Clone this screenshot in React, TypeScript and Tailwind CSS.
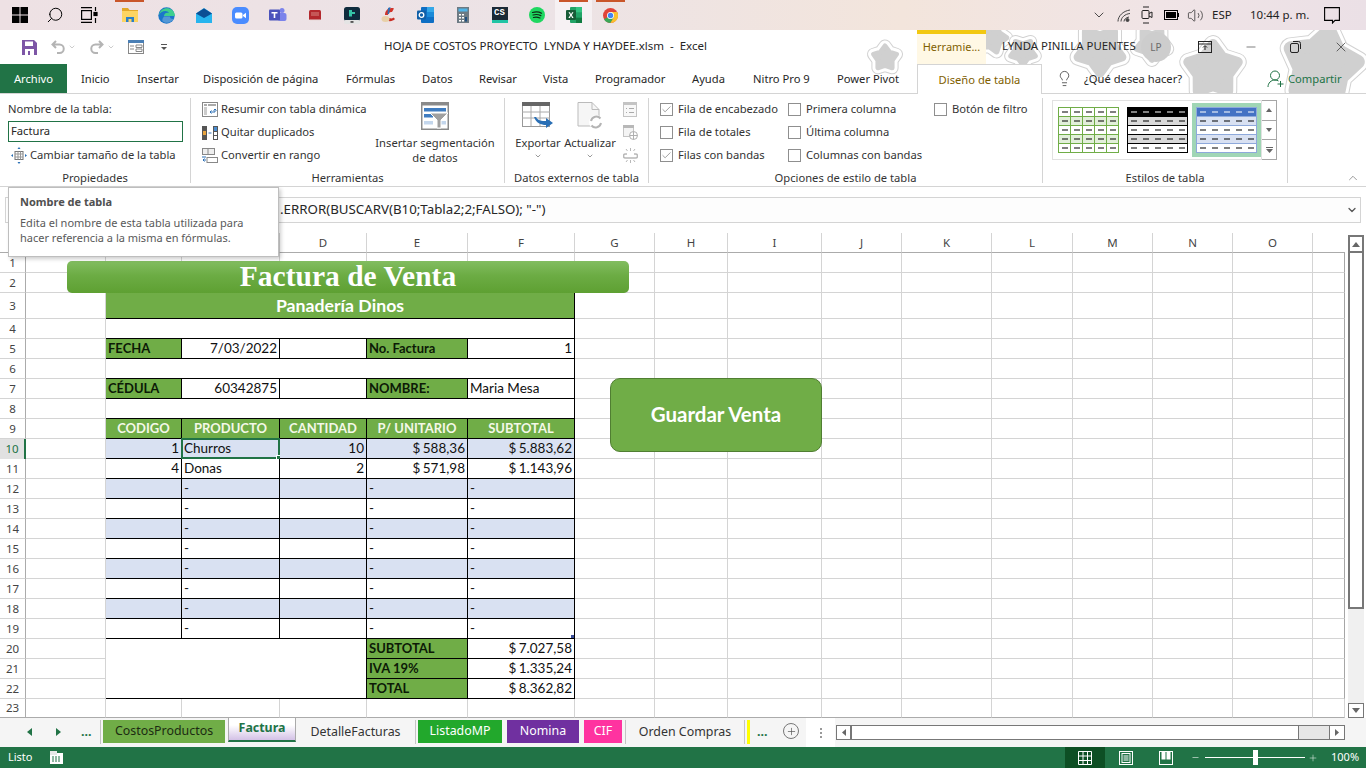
import { ChevronDown, ChevronUp, Minus, Search, Volume2, X, Lightbulb, Plus, Check } from 'lucide-react'
import type { ReactNode } from 'react'

const colWidths = 'grid-cols-[26px_80px_76px_98px_87px_101px_107px_80px_73px_94px_80px_90px_81px_80px_80px_80px_32px]'
// A, B and C are hidden behind the tooltip
const letters = ['', '', '', 'D', 'E', 'F', 'G', 'H', 'I', 'J', 'K', 'L', 'M', 'N', 'O', '']
const rowNumbers = Array.from({ length: 23 }, (_, i) => i + 1)
const money = 'justify-end [word-spacing:-1px]'

function starPoints(cx: number, cy: number, r: number, rot: number) {
  const pts: string[] = []
  for (let i = 0; i < 10; i++) {
    const rad = i % 2 === 0 ? r : r * 0.62
    const a = -Math.PI / 2 + rot + (i * Math.PI) / 5
    pts.push(`${(cx + rad * Math.cos(a)).toFixed(1)},${(cy + rad * Math.sin(a)).toFixed(1)}`)
  }
  return pts.join(' ')
}

function Star({ cx, cy, r, rot = 0 }: { cx: number; cy: number; r: number; rot?: number }) {
  const pts = starPoints(cx, cy, r * 0.72, rot)
  const core = r * 0.28
  return (
    <g strokeLinejoin="round">
      <polygon points={pts} fill="#d2d2d2" stroke="#d2d2d2" strokeWidth={core + 8} />
      <polygon points={pts} fill="#ffffff" stroke="#ffffff" strokeWidth={core + 6} />
      <polygon points={pts} fill="#d0d0d0" stroke="#d0d0d0" strokeWidth={core} />
    </g>
  )
}

function Stars() {
  return (
    <svg className="absolute inset-0 w-full h-full pointer-events-none" viewBox="0 0 1366 64">
      <Star cx={885} cy={28} r={17} />
      <Star cx={992} cy={8} r={20} rot={0.3} />
      <Star cx={1023} cy={22} r={18} rot={3.14} />
      <Star cx={1100} cy={20} r={32} rot={3.14} />
      <Star cx={1152} cy={14} r={22} rot={3.14} />
      <Star cx={1213} cy={40} r={36} />
      <Star cx={1322} cy={36} r={50} rot={0.2} />
    </svg>
  )
}

function TaskIcon({ children, active, line }: { children: ReactNode; active?: boolean; line?: boolean }) {
  return (
    <div className={active ? 'relative w-[37px] h-[30px] flex items-center justify-center bg-[#f6f1f3]' : 'relative w-[37px] h-[30px] flex items-center justify-center'}>
      {line && <div className="absolute top-0 left-[4px] right-[4px] h-[2px] bg-[#c9562a]" />}
      {children}
    </div>
  )
}

function Taskbar() {
  return (
    <div className="h-[30px] flex items-center bg-[linear-gradient(90deg,#eee1e4_0%,#ece3e6_40%,#f3e5dc_66%,#f0e4e6_85%,#ebe0e6_100%)]">
      <div className="w-[2px]" />
      <div className="w-[35px] flex justify-center">
        <svg width="16" height="16" viewBox="0 0 16 16" fill="#000"><rect width="7.5" height="7.5" /><rect x="8.5" width="7.5" height="7.5" /><rect y="8.5" width="7.5" height="7.5" /><rect x="8.5" y="8.5" width="7.5" height="7.5" /></svg>
      </div>
      <div className="w-[35px] flex justify-center">
        <Search size={18} strokeWidth={1.3} className="text-black -scale-x-100" />
      </div>
      <div className="w-[35px] flex justify-center">
        <svg width="17" height="16" viewBox="0 0 17 16" fill="none" stroke="#000" strokeWidth="1.2"><path d="M0 .6h11M0 15.4h11" /><rect x=".6" y="3.6" width="9.8" height="8.8" /><path d="M14.5 0v4M14.5 11v5" /><rect x="13" y="5.5" width="3" height="3" fill="#000" /></svg>
      </div>
      <div className="w-[4px]" />
      <TaskIcon line>
        <svg width="16" height="16" viewBox="0 0 16 16"><path d="M0 1h6l1.5 2H16v2H0z" fill="#e2a82a" /><rect y="4" width="16" height="11" fill="#fcd462" /><path d="M4 15v-5h8v5h-2.5v-3h-3v3z" fill="#2a7fc9" /></svg>
      </TaskIcon>
      <TaskIcon>
        <svg width="17" height="17" viewBox="0 0 17 17"><circle cx="8.5" cy="8.5" r="8.2" fill="#1b76c9" /><path d="M1 8C2 2 9-1 14 3c2.400 2 3 4 2.800 6H6c0-3 3-4 5-3-1-3-8-3-10 2z" fill="#3fcf8e" /><path d="M6 9.500h6c0 3 3 2.500 3.800 2.300-2.300 4.400-8 5-10.800 2.700C3.500 13 5 11 6 9.500z" fill="#ffffff" opacity=".25" /></svg>
      </TaskIcon>
      <TaskIcon>
        <svg width="16" height="15" viewBox="0 0 16 15"><path d="M0 5.500 8 0l8 5.500V15H0z" fill="#1a9fe0" /><path d="M0 5.500 8 10l8-4.500V15H0z" fill="#27b4ee" /><path d="M0 5.500 8 .6l8 4.900L8 10z" fill="#0c4f94" /></svg>
      </TaskIcon>
      <TaskIcon>
        <svg width="17" height="17" viewBox="0 0 17 17"><rect width="17" height="17" rx="5" fill="#4a8cff" /><rect x="3" y="5.500" width="7.500" height="6" rx="1.500" fill="#fff" /><path d="M11 8 14 5.800v5.400L11 9z" fill="#fff" /></svg>
      </TaskIcon>
      <TaskIcon>
        <svg width="18" height="17" viewBox="0 0 18 17"><circle cx="13" cy="3.500" r="2.500" fill="#7b83eb" /><rect x="9" y="6" width="8.500" height="8" rx="2" fill="#7b83eb" /><rect y="2.500" width="11" height="11" rx="1" fill="#4b53bc" /><path d="M2.500 5h6v1.400H6.300V11H4.700V6.400H2.500z" fill="#fff" /></svg>
      </TaskIcon>
      <TaskIcon>
        <svg width="12" height="12" viewBox="0 0 12 12"><rect width="12" height="10" y="1" rx="1.500" fill="#b3282d" /><path d="M2 4h8M2 6h8" stroke="#e8b0a8" strokeWidth=".7" /><path d="M1 11h10" stroke="#e8d8d8" /></svg>
      </TaskIcon>
      <TaskIcon>
        <svg width="16" height="17" viewBox="0 0 16 17"><rect width="16" height="14" rx="2.500" fill="#0f2c3d" /><rect y="13" width="16" height="4" rx="1.500" fill="#e4e4e4" /><path d="M5 3h3v2h3v2H8v2.500H5z" fill="#35c5a7" /><rect x="6.500" y="14.200" width="3" height="1.500" fill="#333" /></svg>
      </TaskIcon>
      <TaskIcon>
        <svg width="16" height="16" viewBox="0 0 16 16"><path d="M13 1.500C8 0 4 3 4 8h3c0-2 2-3.500 4-3z" fill="#d2342a" /><path d="M14 12c-2 2-5 3-8 1.500L8.500 11c1.500.8 3 .4 4-.6z" fill="#c92c22" /><path d="M7 1 9.500 0 8 7 6.500 7z" fill="#2f6fb5" /><ellipse cx="4.500" cy="12" rx="4" ry="3" fill="#e8d0a8" /></svg>
      </TaskIcon>
      <TaskIcon>
        <svg width="17" height="16" viewBox="0 0 17 16"><rect x="4" width="13" height="16" rx="1" fill="#0e6fc4" /><rect x="10" y="0" width="7" height="5" fill="#35a8e8" /><rect x="10" y="5" width="7" height="5" fill="#1b8ad8" /><rect y="3.500" width="9" height="9" rx="1" fill="#0f5fa8" /><circle cx="4.500" cy="8" r="2.300" fill="none" stroke="#fff" strokeWidth="1.300" /></svg>
      </TaskIcon>
      <TaskIcon>
        <svg width="12" height="16" viewBox="0 0 12 16"><rect width="12" height="16" fill="#6d7a83" /><rect x="1.500" y="1.500" width="9" height="3" fill="#4fb4e8" /><path d="M2 7h2v1.500H2zM5 7h2v1.500H5zM2 10h2v1.500H2zM5 10h2v1.500H5zM2 13h2v1.500H2zM5 13h2v1.500H5z" fill="#fff" /><rect x="8" y="10" width="2" height="4.500" fill="#1f4f80" /></svg>
      </TaskIcon>
      <TaskIcon>
        <div className="w-[16px] h-[16px] bg-[#1b2a36] flex flex-col justify-between overflow-hidden">
          <span className="text-white text-[9px] font-bold leading-[12px] text-center font-['Liberation_Mono',monospace]">CS</span>
          <div className="h-[3px] bg-[#21c4a4]" />
        </div>
      </TaskIcon>
      <TaskIcon>
        <svg width="16" height="16" viewBox="0 0 16 16"><circle cx="8" cy="8" r="8" fill="#1ed760" /><path d="M3.500 5.500c3-1 6.500-.8 9 .7M4 8c2.600-.8 5.500-.6 7.800.6M4.500 10.500c2.200-.6 4.500-.4 6.500.5" fill="none" stroke="#0d2814" strokeWidth="1.200" strokeLinecap="round" /></svg>
      </TaskIcon>
      <TaskIcon active line>
        <svg width="16" height="16" viewBox="0 0 16 16"><rect x="4" width="12" height="16" rx="1" fill="#21a366" /><rect x="10" width="6" height="5.300" fill="#33c481" /><rect x="10" y="10.700" width="6" height="5.300" fill="#107c41" /><rect y="3" width="10" height="10" rx="1" fill="#185c37" /><path d="M2.500 5.200h1.500L5 7.200l1.100-2h1.400L5.800 8l1.800 2.900H6.100L5 8.800l-1.100 2.100H2.400L4.200 8z" fill="#fff" /></svg>
      </TaskIcon>
      <TaskIcon line>
        <svg width="15" height="15" viewBox="0 0 15 15"><circle cx="7.500" cy="7.500" r="7.500" fill="#e0443a" /><path d="M7.500 7.500 1 11.200A7.500 7.500 0 0 0 7.500 15l3.700-6z" fill="#3aa757" /><path d="M7.500 4h6.800A7.500 7.500 0 0 1 7.500 15l3.400-6z" fill="#fbc02d" /><circle cx="7.500" cy="7.500" r="3.500" fill="#fff" /><circle cx="7.500" cy="7.500" r="2.700" fill="#4285f4" /></svg>
      </TaskIcon>
      <div className="flex-1" />
      <div className="flex items-center text-[#222] text-[11.5px] pr-[26px]">
        <ChevronDown size={16} strokeWidth={1.2} className="mr-[10px]" />
        <svg width="14" height="13" viewBox="0 0 14 13" fill="none" stroke="#444" strokeWidth="1" className="mr-[10px]"><path d="M1 12.500C1 7 6 2 13 1M4 12.500C4 8.500 8 5 13 4.500M7 12.500C7 10.500 9 8.500 12 8" /><circle cx="10.500" cy="11" r="1.500" fill="#444" /></svg>
        <svg width="12" height="18" viewBox="0 0 12 18" fill="none" stroke="#222" className="mr-[11px]"><rect x="1" y="4.500" width="7" height="8" rx="1" /><path d="M8 7.500 11 6v5.500L8 10M2 1h6M2 17h6" /></svg>
        <svg width="15" height="10" viewBox="0 0 15 10" className="mr-[8px]"><rect x=".5" y=".5" width="13" height="9" fill="none" stroke="#000" /><rect x="2" y="2" width="10" height="6" fill="#000" /><rect x="14" y="3" width="1" height="4" fill="#000" /></svg>
        <Volume2 size={17} strokeWidth={1} className="mr-[8px]" />
        <span className="w-[25px]">ESP</span>
        <span className="ml-[13px] w-[61px] whitespace-nowrap">10:44 p. m.</span>
        <svg width="16" height="17" viewBox="0 0 16 17" fill="none" stroke="#000" strokeWidth="1.100" className="ml-[13px]"><path d="M.6.600h14.800v12.800h-4.400L8.500 16v-2.600H.6z" /></svg>
      </div>
    </div>
  )
}

function TitleBar() {
  return (
    <div className="relative h-[34px] flex items-center text-[#262626]">
      <div className="w-[384px] h-full flex items-center pl-[22px]">
        <svg width="15" height="15" viewBox="0 0 15 15"><path d="M0 0h12l3 3v12H0z" fill="#7d56a6" /><rect x="3" y="1.500" width="8" height="4.500" fill="#fff" /><rect x="3" y="9" width="9" height="6" fill="#fff" /><rect x="6" y="11" width="2" height="4" fill="#7d56a6" /></svg>
        <svg width="14" height="14" viewBox="0 0 14 14" fill="none" stroke="#b4b4b4" strokeWidth="2" className="ml-[14px]"><path d="M5 1 1.500 4.500 5 8M2 4.500h6.500a4 4 0 0 1 0 8.500H6" /></svg>
        <ChevronDown size={8} className="ml-[3px] text-[#b4b4b4]" />
        <svg width="14" height="14" viewBox="0 0 14 14" fill="none" stroke="#b4b4b4" strokeWidth="2" className="ml-[14px]"><path d="M9 1l3.500 3.500L9 8M12 4.500H5.500a4 4 0 0 0 0 8.500H8" /></svg>
        <ChevronDown size={8} className="ml-[3px] text-[#b4b4b4]" />
        <svg width="16" height="14" viewBox="0 0 16 14" className="ml-[13px]"><rect x=".5" y=".5" width="15" height="13" fill="#fff" stroke="#888" /><rect width="16" height="3" fill="#4a7fb5" /><path d="M2 6h4M2 9h4M8 5h6v2.500H8zM8 9h6v2.500H8z" fill="none" stroke="#888" /></svg>
        <svg width="8" height="8" viewBox="0 0 8 8" fill="#555" className="ml-[16px]"><rect x="1" y="1" width="6" height="1" /><path d="M1 4h6L4 7z" /></svg>
      </div>
      <div className="w-[533px] mb-[2px] text-[11.5px] whitespace-pre">HOJA DE COSTOS PROYECTO  LYNDA Y HAYDEE.xlsm  -  Excel</div>
      <div className="w-[69px] h-full pb-[3px] bg-[#fff8e5] border-t-[4px] border-[#f2c811] flex items-center justify-center text-[#7f6000] text-[11px]">Herramie...</div>
      <div className="ml-[16px] mb-[2px] w-[133px] text-[11.4px] whitespace-nowrap">LYNDA PINILLA PUENTES</div>
      <div className="ml-[6px] w-[30px] h-[30px] rounded-full bg-[#cdcdcd] flex items-center justify-center text-[10px] text-[#6b6b6b]">LP</div>
      <svg width="14" height="12" viewBox="0 0 14 12" fill="none" stroke="#222" className="ml-[27px]"><rect x=".5" y=".5" width="13" height="11" /><path d="M0 3h14M7 9V5M5 6.500 7 4.500l2 2" /></svg>
      <Minus size={14} strokeWidth={1} className="ml-[32px] text-[#222]" />
      <svg width="11" height="12" viewBox="0 0 11 12" fill="none" stroke="#222" className="ml-[32px]"><rect x=".5" y="2.500" width="8" height="9" rx="1.500" /><path d="M3 .5h5.500a2 2 0 0 1 2 2V8" /></svg>
      <X size={16} strokeWidth={1} className="ml-[32px] text-[#222]" />
    </div>
  )
}

function TabsRow() {
  const tabs = [
    ['Inicio', 'w-[56px]'],
    ['Insertar', 'w-[66px]'],
    ['Disposición de página', 'w-[143px]'],
    ['Fórmulas', 'w-[76px]'],
    ['Datos', 'w-[57px]'],
    ['Revisar', 'w-[64px]'],
    ['Vista', 'w-[52px]'],
    ['Programador', 'w-[97px]'],
    ['Ayuda', 'w-[61px]'],
    ['Nitro Pro 9', 'w-[84px]'],
    ['Power Pivot', 'w-[66px]'],
  ]
  return (
    <div className="relative h-[30px] flex border-b border-[#d4d4d4] text-[11.2px] text-[#262626] whitespace-nowrap">
      <div className="w-[67px] h-[29px] pt-[1px] bg-[#217346] text-white flex items-center justify-center">Archivo</div>
      <div className="w-[850px] pl-[14px] pt-[1px] flex items-center">
        {tabs.map(t => <span key={t[0]} className={t[1]}>{t[0]}</span>)}
      </div>
      <div className="w-[125px] h-[30px] pt-[1px] bg-white border border-b-0 border-[#d4d4d4] flex items-center justify-center text-[#7f6000]">Diseño de tabla</div>
      <Lightbulb size={17} strokeWidth={1} className="ml-[14px] self-center text-[#222]" />
      <span className="ml-[11px] w-[97px] pt-[1px] self-center">¿Qué desea hacer?</span>
      <div className="ml-[86px] pt-[1px] self-center flex items-center text-[#217346]">
        <svg width="18" height="18" viewBox="0 0 18 18" fill="none" stroke="#217346" strokeWidth="1"><circle cx="8" cy="5.500" r="4.500" /><path d="M1 17c0-4 3-7 7-7 1.500 0 2.500.4 3.500 1M13.500 11v6M10.500 14h6" /></svg>
        <span className="ml-[3px]">Compartir</span>
      </div>
    </div>
  )
}

function Sep() {
  return <div className="w-px h-[85px] mt-[4px] bg-[#d4d4d4]" />
}

function Group({ width, label, children }: { width: string; label: string; children: ReactNode }) {
  return (
    <div className={`${width} h-full pt-[4px] flex flex-col`}>
      <div className="flex-1 min-h-0">{children}</div>
      <div className="h-[17px] text-center leading-[17px] whitespace-nowrap">{label}</div>
    </div>
  )
}

function ToolRow({ icon, text }: { icon: ReactNode; text: string }) {
  return (
    <div className="h-[23px] flex items-center whitespace-nowrap">
      <div className="w-[16px] h-[16px] mr-[3px] flex items-center justify-center">{icon}</div>
      {text}
    </div>
  )
}

function CheckRow({ text, on }: { text: string; on?: boolean }) {
  return (
    <div className="h-[23px] flex items-center whitespace-nowrap">
      <div className="w-[13px] h-[13px] mr-[5px] border border-[#8f8f8f] bg-white flex items-center justify-center">
        {on && <Check size={11} strokeWidth={1.2} className="text-[#555]" />}
      </div>
      {text}
    </div>
  )
}

function Thumb({ kind }: { kind: 'green' | 'black' | 'blue' }) {
  const rowH = 9
  const line = kind === 'green' ? '#70ad47' : kind === 'black' ? '#000000' : '#8ea9db'
  const band = kind === 'green' ? '#e2efda' : kind === 'black' ? '#d9d9d9' : '#d9e1f2'
  const head = kind === 'green' ? '#ffffff' : kind === 'black' ? '#000000' : '#4472c4'
  return (
    <svg width="61" height="46" viewBox="0 0 61 46" className="block">
      {[0, 1, 2, 3, 4].map(r => (
        <g key={r}>
          <rect x=".5" y={r * rowH + 0.5} width="60" height={rowH} fill={r === 0 ? head : r % 2 === 1 ? band : '#ffffff'} stroke={line} />
          {[0, 1, 2, 3, 4].map(c => (
            <rect key={c} x={4 + c * 12} y={r * rowH + 4.5} width="6" height="1" fill={r === 0 && kind !== 'green' ? '#ffffff' : '#000000'} />
          ))}
        </g>
      ))}
      {kind === 'green' && [12, 24, 36, 48].map(x => <rect key={x} x={x} y="0" width="1" height="46" fill={line} />)}
    </svg>
  )
}

function GalleryButton({ children, last }: { children: ReactNode; last?: boolean }) {
  return <div className={last ? 'flex-1 flex items-center justify-center' : 'flex-1 flex items-center justify-center border-b border-[#a6a6a6]'}>{children}</div>
}

function Ribbon() {
  return (
    <div className="relative h-[93px] flex border-b border-[#d4d4d4] text-[11.2px] text-[#333]">
      <Group width="w-[190px]" label="Propiedades">
        <div className="pl-[8px]">
          <div className="h-[23px] flex items-center">Nombre de la tabla:</div>
          <div className="w-[175px] h-[21px] border border-[#217346] flex items-center pl-[2px] text-[#262626]">Factura</div>
          <div className="h-[27px] pl-[3px] flex items-center whitespace-nowrap">
            <svg width="16" height="17" viewBox="0 0 16 17" fill="none" className="mr-[3px]"><rect x="4" y="4.500" width="8" height="8" stroke="#777" /><path d="M4 7h8M4 10h8M7 4.500v8M9.500 4.500v8" stroke="#999" /><path d="M8 0 6.500 2h3zM8 17l-1.500-2h3zM0 8.500 2 7v3zM16 8.500 14 7v3z" fill="#2a6fb5" /></svg>
            Cambiar tamaño de la tabla
          </div>
        </div>
      </Group>
      <Sep />
      <Group width="w-[313px]" label="Herramientas">
        <div className="flex">
          <div className="w-[184px] pl-[11px]">
            <ToolRow text="Resumir con tabla dinámica" icon={<svg width="16" height="15" viewBox="0 0 16 15"><rect x=".5" y=".5" width="15" height="14" fill="#fff" stroke="#888" /><rect x="2" y="2" width="3" height="2" fill="#aaa" /><rect x="6" y="2" width="8" height="2" fill="#aaa" /><rect x="2" y="5" width="3" height="8" fill="#ccc" /><path d="M13 7v3H8M9.500 8.500 8 10l1.500 1.500M11.500 8.500 13 7l1.500 1.500" fill="none" stroke="#2a6fb5" /></svg>} />
            <ToolRow text="Quitar duplicados" icon={<svg width="16" height="14" viewBox="0 0 16 14"><rect width="5" height="14" fill="#555" /><rect x="1" y="5" width="3" height="4" fill="#e8a33d" /><rect x="11" width="5" height="14" fill="#555" /><rect x="12" y="1" width="3" height="4" fill="#4a8cd0" /><rect x="12" y="6" width="3" height="3" fill="#fff" /><rect x="12" y="10" width="3" height="3" fill="#fff" /><path d="M6.500 7h3" stroke="#2a6fb5" /></svg>} />
            <ToolRow text="Convertir en rango" icon={<svg width="16" height="15" viewBox="0 0 16 15" fill="none"><rect x=".5" y=".5" width="12" height="6" stroke="#888" fill="#eee" /><path d="M6 .5v6" stroke="#888" /><rect x="5" y="9.500" width="10.500" height="5" stroke="#888" /><path d="M0 9h4M4 12H1l1.500-1.500M1 12l1.500 1.500" stroke="#2a6fb5" /></svg>} />
          </div>
          <div className="w-[120px] pt-[4px] flex flex-col items-center text-center whitespace-nowrap">
            <svg width="28" height="28" viewBox="0 0 28 28"><rect width="28" height="28" fill="#8a8a8a" /><rect x="1.500" y="3.500" width="25" height="23" fill="#fff" /><rect x="3" y="6" width="22" height="3.500" fill="#3f7cc0" /><rect x="3" y="12" width="9" height="3.500" fill="#3f7cc0" /><rect x="3" y="19" width="9" height="3.500" fill="#c3d6ec" /><rect x="18" y="19" width="7" height="3.500" fill="#c3d6ec" /><path d="M9 11h18l-7 7v8h-4v-8z" fill="#a0a0a0" stroke="#fff" /></svg>
            <div className="mt-[5px] leading-[15px]">Insertar segmentación</div>
            <div className="leading-[15px]">de datos</div>
          </div>
        </div>
      </Group>
      <Sep />
      <Group width="w-[143px]" label="Datos externos de tabla">
        <div className="flex pl-[10px]">
          <div className="w-[46px] pt-[4px] flex flex-col items-center">
            <svg width="32" height="28" viewBox="0 0 32 28" fill="none"><rect x=".5" y=".5" width="27" height="24" fill="#fff" stroke="#999" /><rect width="28" height="4" fill="#666" /><path d="M0 10h28M0 16h28M9 4v20M18 4v20" stroke="#aaa" /><path d="M14 19c2 4 6 4 10 4v-3l7 5-7 5v-3c-5 0-10-2-12-8z" fill="#2a6fb5" transform="translate(0 -4)" /></svg>
            <div className="mt-[5px] leading-[15px]">Exportar</div>
            <ChevronDown size={8} className="mt-[2px] text-[#666]" />
          </div>
          <div className="w-[54px] ml-[2px] pt-[4px] flex flex-col items-center">
            <svg width="28" height="28" viewBox="0 0 28 28" fill="none"><path d="M2 .5h14l7 7V24H2z" fill="#f6f6f6" stroke="#bbb" /><path d="M16 .5v7h7" stroke="#bbb" /><circle cx="20" cy="20" r="7" fill="#fff" /><path d="M15 19a5.500 5.500 0 0 1 9.500-2.500M25 21a5.500 5.500 0 0 1-9.500 2.500" stroke="#b4b4b4" strokeWidth="2" /></svg>
            <div className="mt-[5px] leading-[15px]">Actualizar</div>
            <ChevronDown size={8} className="mt-[2px] text-[#666]" />
          </div>
          <div className="ml-[5px] w-[16px] flex flex-col items-center">
            <div className="h-[23px] flex items-center"><svg width="14" height="15" viewBox="0 0 14 15" fill="none"><rect x=".5" y=".5" width="13" height="14" fill="#f8f8f8" stroke="#c4c4c4" /><rect width="14" height="3" fill="#c4c4c4" /><path d="M3 6.500h1M6 6.500h5M3 10.500h1M6 10.500h5" stroke="#aaa" /></svg></div>
            <div className="h-[23px] flex items-center"><svg width="15" height="15" viewBox="0 0 15 15" fill="none"><rect x=".5" y=".5" width="10" height="11" fill="#f4f4f4" stroke="#c4c4c4" /><rect width="11" height="3" fill="#b8b8b8" /><circle cx="10.500" cy="10.500" r="4" fill="#fff" stroke="#b0b0b0" /><path d="M6.500 10.500h8M10.500 6.500v8" stroke="#b0b0b0" /></svg></div>
            <div className="h-[23px] flex items-center"><svg width="15" height="15" viewBox="0 0 15 15" fill="none" stroke="#b8b8b8"><path d="M4 6H2.500a2 2 0 0 0 0 4h10a2 2 0 0 0 0-4H11" strokeWidth="1.500" /><path d="M7.500 0v3M3 1l1.500 2M12 1l-1.500 2M7.500 12v3M3 14l1.500-2M12 14l-1.500-2" /></svg></div>
          </div>
        </div>
      </Group>
      <Sep />
      <Group width="w-[393px]" label="Opciones de estilo de tabla">
        <div className="flex pl-[11px]">
          <div className="w-[128px]">
            <CheckRow text="Fila de encabezado" on />
            <CheckRow text="Fila de totales" />
            <CheckRow text="Filas con bandas" on />
          </div>
          <div className="w-[146px]">
            <CheckRow text="Primera columna" />
            <CheckRow text="Última columna" />
            <CheckRow text="Columnas con bandas" />
          </div>
          <div>
            <CheckRow text="Botón de filtro" />
          </div>
        </div>
      </Group>
      <Sep />
      <Group width="w-[244px]" label="Estilos de tabla">
        <div className="flex pl-[9px] mt-[2px] h-[60px]">
          <div className="w-[210px] border border-[#e1e1e1] flex items-center pl-[5px]">
            <Thumb kind="green" />
            <div className="ml-[8px]"><Thumb kind="black" /></div>
            <div className="ml-[4px] p-[4px] bg-[#a0d6b5]"><Thumb kind="blue" /></div>
          </div>
          <div className="w-[15px] border border-l-0 border-[#a6a6a6] flex flex-col">
            <GalleryButton><svg width="6" height="4" viewBox="0 0 6 4" fill="#666"><path d="M3 0 6 4H0z" /></svg></GalleryButton>
            <GalleryButton><svg width="6" height="4" viewBox="0 0 6 4" fill="#666"><path d="M3 4 6 0H0z" /></svg></GalleryButton>
            <GalleryButton last><svg width="7" height="6" viewBox="0 0 7 6" fill="#666"><rect width="7" height="1" /><path d="M0 2h7L3.500 6z" /></svg></GalleryButton>
          </div>
        </div>
      </Group>
      <Sep />
      <div className="flex-1 flex items-end justify-end pr-[6px] pb-[1px]">
        <ChevronUp size={14} strokeWidth={1} className="text-[#555]" />
      </div>
    </div>
  )
}

function FormulaBar() {
  return (
    <div className="h-[46px] pt-[10px] pl-[5px] pr-[5px] flex text-[13.3px] text-[#262626]">
      <div className="w-[60px] h-[26px] border border-[#d4d4d4]" />
      <div className="flex-1 h-[26px] border border-[#d4d4d4] bg-[#fdfdfd] flex items-center pl-[214px] pr-[2px] whitespace-nowrap">
        .ERROR(BUSCARV(B10;Tabla2;2;FALSO); "-")
        <div className="flex-1" />
        <ChevronDown size={12} strokeWidth={2.5} className="text-[#555]" />
      </div>
    </div>
  )
}

function Cell({ children, kind = 'plain', className = '' }: { children?: ReactNode; kind?: 'plain' | 'green' | 'head' | 'band' | 'title'; className?: string }) {
  const base = 'relative border-r border-b border-black flex items-center px-[2px] whitespace-nowrap'
  const look = kind === 'green'
    ? 'bg-[#70ad47] font-bold text-[#0c1a06] text-[13px]'
    : kind === 'head'
      ? 'bg-[#70ad47] font-bold text-[#f4f8e8] justify-center text-[13px]'
      : kind === 'title'
        ? 'bg-[#70ad47] font-bold text-white justify-center text-[17.7px] pt-[1px]'
        : kind === 'band' ? 'bg-[#d9e1f2]' : 'bg-white'
  return <div className={`${base} ${look} ${className}`}>{children}</div>
}

const items = [
  ['1', 'Churros', '10', '$ 588,36', '$ 5.883,62'],
  ['4', 'Donas', '2', '$ 571,98', '$ 1.143,96'],
  ['', '-', '', '-', '-'],
  ['', '-', '', '-', '-'],
  ['', '-', '', '-', '-'],
  ['', '-', '', '-', '-'],
  ['', '-', '', '-', '-'],
  ['', '-', '', '-', '-'],
  ['', '-', '', '-', '-'],
  ['', '-', '', '-', '-'],
]

function InvoiceTable() {
  return (
    <div className="col-start-3 col-end-8 row-start-4 row-end-24 -ml-px border-l border-black grid grid-cols-[76px_98px_87px_101px_107px] grid-rows-[26px_repeat(19,20px)] text-[13.5px] text-[#111] font-['Lato',sans-serif]">
      <Cell kind="title" className="col-span-5">Panadería Dinos</Cell>
      <Cell className="col-span-5" />
      <Cell kind="green">FECHA</Cell>
      <Cell className="justify-end">7/03/2022</Cell>
      <Cell />
      <Cell kind="green">No. Factura</Cell>
      <Cell className="justify-end">1</Cell>
      <Cell className="col-span-5" />
      <Cell kind="green">CÉDULA</Cell>
      <Cell className="justify-end">60342875</Cell>
      <Cell />
      <Cell kind="green">NOMBRE:</Cell>
      <Cell>Maria Mesa</Cell>
      <Cell className="col-span-5" />
      <Cell kind="head">CODIGO</Cell>
      <Cell kind="head">PRODUCTO</Cell>
      <Cell kind="head">CANTIDAD</Cell>
      <Cell kind="head">P/ UNITARIO</Cell>
      <Cell kind="head">SUBTOTAL</Cell>
      {items.map((row, i) => {
        const kind = i % 2 === 0 ? 'band' : 'plain'
        return (
          <div key={i} className="contents">
            <Cell kind={kind} className="justify-end">{row[0]}</Cell>
            <Cell kind={kind}>
              {row[1]}
              {i === 0 && (
                <div className="absolute -left-px -top-px -right-px -bottom-px border-2 border-[#217346]">
                  <div className="absolute -right-[4px] -bottom-[4px] w-[6px] h-[6px] bg-[#217346] border border-white" />
                </div>
              )}
            </Cell>
            <Cell kind={kind} className="justify-end">{row[2]}</Cell>
            <Cell kind={kind} className={row[3] === '-' ? '' : money}>{row[3]}</Cell>
            <Cell kind={kind} className={row[4] === '-' ? '' : money}>
              {row[4]}
              {i === 9 && <div className="absolute right-0 bottom-0 w-[3px] h-[3px] bg-[#3b4f9c]" />}
            </Cell>
          </div>
        )
      })}
      <Cell className="col-span-3 row-span-3" />
      <Cell kind="green">SUBTOTAL</Cell>
      <Cell className={money}>$ 7.027,58</Cell>
      <Cell kind="green">IVA 19%</Cell>
      <Cell className={money}>$ 1.335,24</Cell>
      <Cell kind="green">TOTAL</Cell>
      <Cell className={money}>$ 8.362,82</Cell>
    </div>
  )
}

function Sheet() {
  return (
    <div className="relative flex h-[485px]">
      <div className={`w-[1345px] grid ${colWidths} grid-rows-[20px_20px_20px_26px_repeat(19,20px)_19px] text-[11.5px] text-[#444]`}>
        <InvoiceTable />
        <div className="border-b border-r border-[#ababab] flex items-end justify-end p-[2px]">
          <svg width="9" height="9" viewBox="0 0 9 9" fill="#b4b4b4"><path d="M9 0v9H0z" /></svg>
        </div>
        {letters.map((l, i) => (
          <div key={i} className={i === 15 ? 'border-b border-[#ababab]' : 'border-b border-r border-b-[#ababab] border-r-[#d4d4d4] flex items-center justify-center'}>{l}</div>
        ))}
        {rowNumbers.map(r => (
          <div key={r} className="contents">
            <div className={r === 10
              ? 'bg-[#e1e1e1] border-r-2 border-[#217346] flex items-center justify-center text-[#217346]'
              : r === 23
                ? 'border-r border-b border-r-[#ababab] border-b-[#ababab] flex items-center justify-center'
                : 'border-r border-b border-r-[#ababab] border-b-[#d4d4d4] flex items-center justify-center'}>{r}</div>
            {letters.map((_, c) => {
              const inTable = c >= 1 && c <= 5 && r >= 3 && r <= 22
              if (inTable) return null
              if (r === 23) return <div key={c} className="border-b border-r border-b-[#ababab] border-r-[#d4d4d4]" />
              return <div key={c} className={c === 15 ? 'border-b border-r border-b-[#d4d4d4] border-r-[#a6a6a6]' : 'border-b border-r border-[#d4d4d4]'} />
            })}
          </div>
        ))}
      </div>
      <div className="flex-1 pt-[2px] pl-[3px] flex flex-col">
        <div className="h-[16px] w-[16px] border-2 border-b-0 border-[#777] flex items-center justify-center bg-white">
          <svg width="8" height="5" viewBox="0 0 8 5" fill="#666"><path d="M4 0 8 5H0z" /></svg>
        </div>
        <div className="h-[358px] w-[16px] border-2 border-[#777] bg-white" />
        <div className="flex-1 w-[16px] bg-[#f0f0f0]" />
        <div className="h-[15px] w-[16px] border border-[#777] flex items-center justify-center bg-white">
          <svg width="8" height="5" viewBox="0 0 8 5" fill="#666"><path d="M4 5 8 0H0z" /></svg>
        </div>
      </div>

      <div className="absolute left-[67px] top-[28px] w-[562px] h-[32px] rounded-[5px] bg-[linear-gradient(180deg,#82bd60_0%,#6cac44_45%,#5ea032_100%)] flex items-center justify-center text-white text-[29.5px] font-bold font-['Liberation_Serif',serif] leading-none">
        Factura de Venta
      </div>
      <div className="absolute left-[610px] top-[145px] w-[212px] h-[74px] pb-[2px] rounded-[10px] bg-[#70ad47] border border-[#507e32] flex items-center justify-center text-white text-[20.5px] font-bold font-['Lato',sans-serif]">
        Guardar Venta
      </div>
    </div>
  )
}

function TabBar() {
  return (
    <div className="h-[29px] flex items-start bg-[#f5f5f5] text-[12.4px] text-[#333] whitespace-nowrap">
      <div className="w-[101px] h-[24px] mt-[2px] flex items-center border-r border-[#c4c4c4] text-[#217346] font-bold">
        <svg width="5" height="8" viewBox="0 0 5 8" fill="#217346" className="ml-[27px]"><path d="M5 0v8L0 4z" /></svg>
        <svg width="5" height="8" viewBox="0 0 5 8" fill="#217346" className="ml-[24px]"><path d="M0 0v8l5-4z" /></svg>
        <span className="ml-[20px]">...</span>
      </div>
      <div className="mt-[2px] ml-[2px] w-[122px] h-[23px] bg-[#70ad47] flex items-center justify-center text-[#1c2b12]">CostosProductos</div>
      <div className="w-[68px] ml-[3px] h-[25px] -mt-px bg-[linear-gradient(180deg,#ffffff_0%,#ffffff_35%,#d3c1e6_100%)] border-x border-b-2 border-x-[#aaa] border-b-[#217346] flex items-center justify-center font-bold text-[#217346]">Factura</div>
      <div className="w-[120px] h-[24px] mt-[2px] flex items-center justify-center border-r border-[#c4c4c4]">DetalleFacturas</div>
      <div className="mt-[2px] ml-[2px] w-[84px] h-[23px] bg-[#22a82c] text-white flex items-center justify-center">ListadoMP</div>
      <div className="mt-[2px] ml-[5px] w-[72px] h-[23px] bg-[#7030a0] text-white flex items-center justify-center">Nomina</div>
      <div className="mt-[2px] ml-[5px] w-[38px] h-[23px] bg-[#ff33a0] text-white flex items-center justify-center">CIF</div>
      <div className="w-[120px] ml-[3px] h-[24px] mt-[2px] flex items-center justify-center border-x border-[#c4c4c4]">Orden Compras</div>
      <div className="w-[3px] h-[24px] mt-[2px] ml-[2px] bg-[#ffff00]" />
      <span className="ml-[7px] w-[10px] mt-[5px] font-bold text-[#217346]">...</span>
      <div className="ml-[16px] mt-[5px] w-[16px] h-[16px] rounded-full border border-[#777] flex items-center justify-center text-[#555]">
        <Plus size={11} strokeWidth={1.5} />
      </div>
      <div className="ml-[7px] w-[29px] h-[29px] bg-white flex flex-col items-center justify-center gap-[2px]">
        <div className="w-[2px] h-[2px] bg-[#999]" />
        <div className="w-[2px] h-[2px] bg-[#999]" />
        <div className="w-[2px] h-[2px] bg-[#999]" />
      </div>
      <div className="ml-[1px] mt-[7px] w-[509px] h-[15px] flex border border-[#777]">
        <div className="w-[15px] border-r-2 border-[#777] bg-white flex items-center justify-center">
          <svg width="4" height="7" viewBox="0 0 4 7" fill="#666"><path d="M4 0v7L0 3.500z" /></svg>
        </div>
        <div className="w-[447px] bg-white border-r border-[#777]" />
        <div className="flex-1 bg-[#e6e6e6]" />
        <div className="w-[15px] border-l border-[#777] bg-white flex items-center justify-center">
          <svg width="4" height="7" viewBox="0 0 4 7" fill="#666"><path d="M0 0v7l4-3.500z" /></svg>
        </div>
      </div>
    </div>
  )
}

function StatusBar() {
  return (
    <div className="h-[21px] bg-[#217346] flex items-center text-white text-[11px]">
      <span className="ml-[8px] w-[24px]">Listo</span>
      <svg width="13" height="13" viewBox="0 0 13 13" className="ml-[18px]"><rect x="0" y="2" width="13" height="11" fill="#fff" /><rect x="0" y="0" width="7" height="4" fill="#e8e8e8" /><path d="M2 6h2M5 6h2M8 6h2M2 8h2M5 8h2M8 8h2M2 10h2M5 10h2M8 10h2" stroke="#217346" /></svg>
      <div className="flex-1" />
      <div className="w-[40px] h-[21px] bg-[#0d4f24] flex items-center justify-center">
        <svg width="14" height="14" viewBox="0 0 14 14" fill="none" stroke="#fff"><path d="M.5.500h13v13H.5zM.5 5h13M.5 9.500h13M5 .500v13M9.500.500v13" /></svg>
      </div>
      <div className="w-[41px] flex justify-center">
        <svg width="14" height="14" viewBox="0 0 14 14" fill="none" stroke="#fff"><rect x=".5" y=".5" width="13" height="13" /><rect x="3" y="2.500" width="8" height="9" /><path d="M4.500 5h5M4.500 7h5M4.500 9h5" /></svg>
      </div>
      <div className="w-[40px] flex justify-center">
        <svg width="14" height="14" viewBox="0 0 14 14" fill="none" stroke="#fff"><rect x=".5" y=".5" width="13" height="13" /><rect x="3" y="1" width="3" height="7" fill="#fff" /><rect x="8" y="1" width="3" height="7" fill="#fff" /></svg>
      </div>
      <Minus size={9} strokeWidth={1.5} className="ml-[5px]" />
      <div className="ml-[5px] w-[100px] h-px bg-white relative">
        <div className="absolute left-[48px] -top-[7px] w-[5px] h-[15px] bg-white" />
      </div>
      <Plus size={10} strokeWidth={1.2} className="ml-[3px]" />
      <span className="ml-[13px] mr-[8px] w-[27px] whitespace-nowrap">100%</span>
    </div>
  )
}

export default function App() {
  return (
    <div className="relative w-[1366px] h-[768px] overflow-hidden bg-white flex flex-col font-['Noto_Sans',sans-serif]">
      <Taskbar />
      <div className="relative">
        <Stars />
        <TitleBar />
        <TabsRow />
      </div>
      <Ribbon />
      <FormulaBar />
      <Sheet />
      <TabBar />
      <StatusBar />

      <div className="absolute left-[8px] top-[187px] w-[271px] h-[70px] bg-white border border-[#bebebe] shadow-[2px_2px_4px_rgba(0,0,0,0.2)] pl-[11px] pt-[6px] text-[11px] text-[#595959]">
        <div className="font-bold leading-[15px] text-[#505050]">Nombre de tabla</div>
        <div className="mt-[6px] leading-[15px]">Edita el nombre de esta tabla utilizada para</div>
        <div className="leading-[15px]">hacer referencia a la misma en fórmulas.</div>
      </div>
    </div>
  )
}
